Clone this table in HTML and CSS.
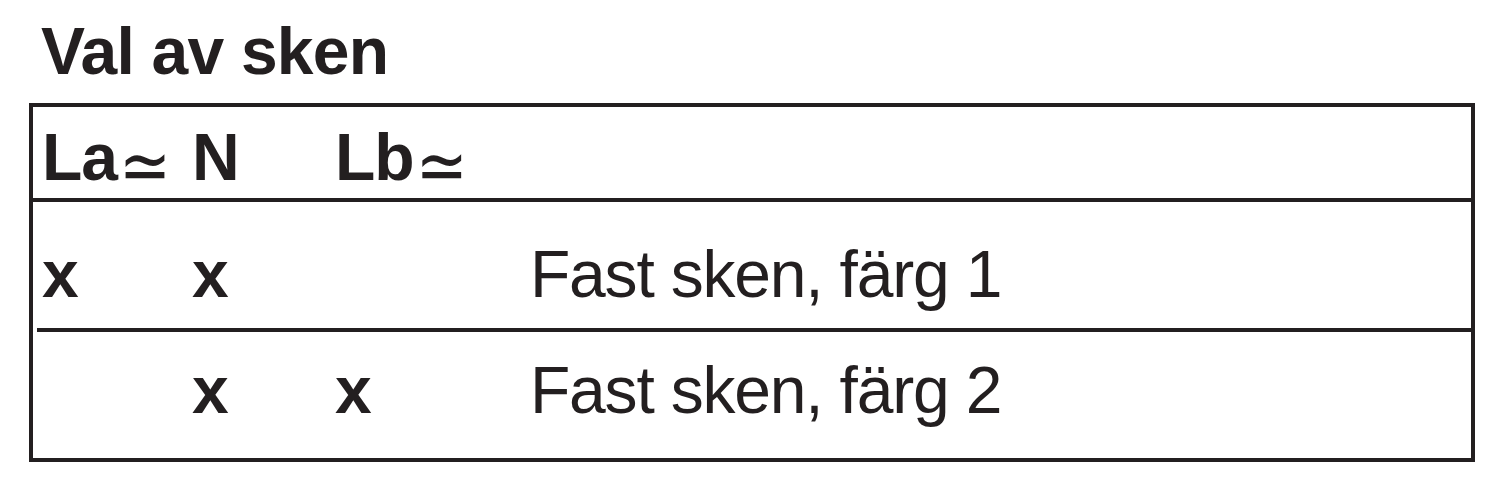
FILE: index.html
```html
<!DOCTYPE html>
<html lang="sv">
<head>
<meta charset="utf-8">
<title>Val av sken</title>
<link rel="stylesheet" href="styles.css">
</head>
<body>
<h1 class="title">Val av sken</h1>
<div class="table">
  <div class="row row-head">
    <span class="cell b">La<span class="approx">≃</span></span>
    <span class="cell b">N</span>
    <span class="cell b">Lb<span class="approx">≃</span></span>
    <span class="cell"></span>
  </div>
  <div class="row row-1">
    <span class="cell b">x</span>
    <span class="cell b">x</span>
    <span class="cell"></span>
    <span class="cell">Fast sken, färg 1</span>
  </div>
  <div class="row row-2">
    <span class="cell"></span>
    <span class="cell b">x</span>
    <span class="cell b">x</span>
    <span class="cell">Fast sken, färg 2</span>
  </div>
</div>
</body>
</html>
```
FILE: styles.css
```css
html, body {
  margin: 0;
  padding: 0;
  background: #ffffff;
}
body {
  font-family: "Liberation Sans", Helvetica, Arial, sans-serif;
  color: #231f20;
  width: 1500px;
  height: 498px;
  overflow: hidden;
}
.title {
  margin: 18px 0 0 41px;
  font-size: 66px;
  line-height: 66px;
  font-weight: 700;
  letter-spacing: -0.8px;
}
.table {
  margin: 19px 0 0 29px;
  width: 1446px;
  box-sizing: border-box;
  border: 4px solid #231f20;
}
.row {
  display: grid;
  grid-template-columns: 150px 143px 195px 1fr;
  padding-left: 9px;
  font-size: 66px;
  line-height: 66px;
  letter-spacing: -1.2px;
  white-space: nowrap;
}
.cell { display: block; }
.b { font-weight: 700; letter-spacing: -1px; }
.row-head {
  height: 95px;
  box-sizing: border-box;
  padding-top: 17px;
  border-bottom: 4px solid #231f20;
}
.row-1 {
  height: 126px;
  box-sizing: border-box;
  padding-top: 39px;
}
.row-2 {
  height: 130px;
  box-sizing: border-box;
  padding-top: 25px;
  margin-left: 4px;
  padding-left: 5px;
  border-top: 4px solid #231f20;
}
.approx {
  display: inline-block;
  font-family: "DejaVu Sans", sans-serif;
  font-weight: 400;
  font-size: 62px;
  letter-spacing: 0;
  margin-left: 2px;
  vertical-align: -7px;
  transform: scaleY(1.2);
}
```
